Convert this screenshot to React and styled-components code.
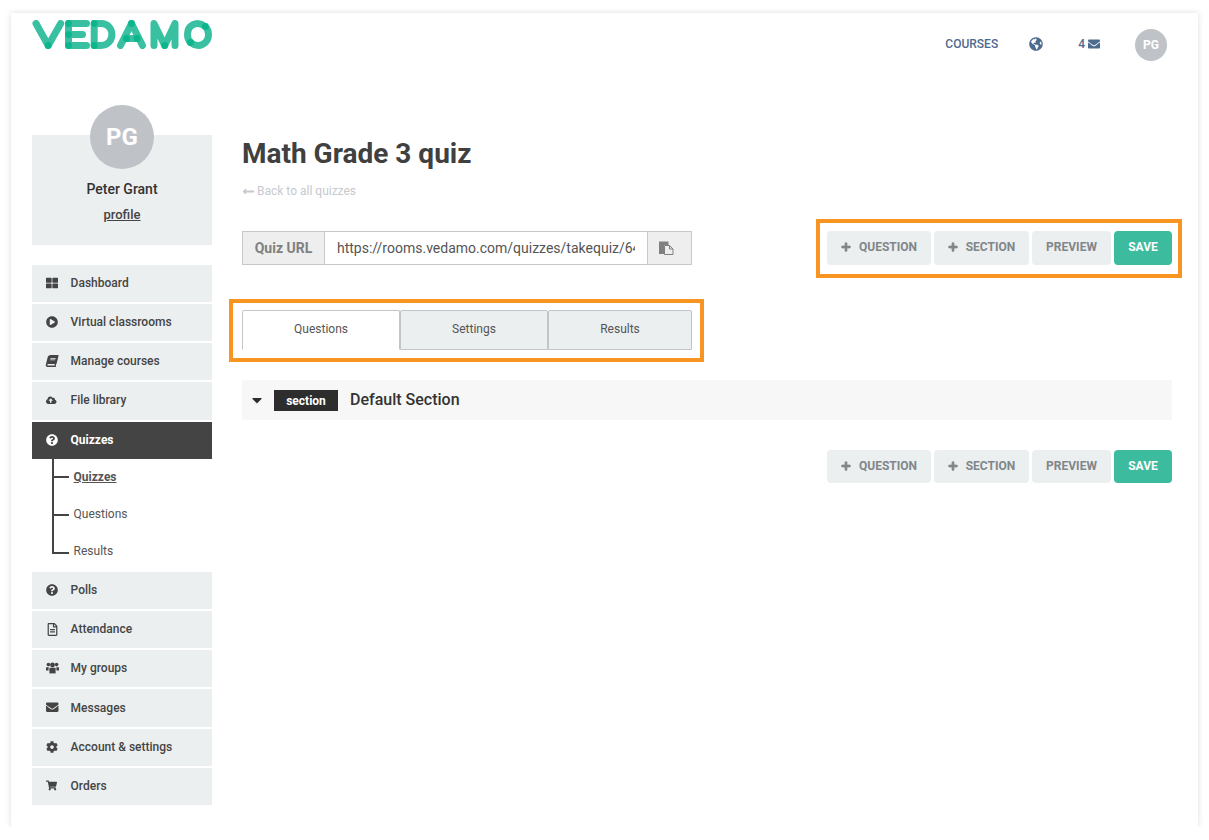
import React from "react";
import styled, { createGlobalStyle } from "styled-components";
import {
  FaThLarge,
  FaPlayCircle,
  FaBook,
  FaCloudUploadAlt,
  FaQuestionCircle,
  FaRegFileAlt,
  FaEnvelope,
  FaCog,
  FaShoppingCart,
  FaGlobeAmericas,
  FaPlus,
  FaCaretDown,
  FaLongArrowAltLeft,
} from "react-icons/fa";

const GlobalStyle = createGlobalStyle`
  html, body { margin: 0; padding: 0; background: #fff; }
  body { font-family: Roboto, "Liberation Sans", sans-serif; color: #404040; }
  * { box-sizing: border-box; }
`;

const Panel = styled.div`
  width: 1187px;
  height: 814px;
  margin: 13px 0 0 11px;
  padding: 7px 26px 0 21px;
  background: #fff;
  box-shadow: 0 0 6px rgba(0, 0, 0, 0.14);
`;

const Header = styled.header`
  display: flex;
  align-items: flex-start;
  justify-content: space-between;
  height: 85px;
`;

const LogoSvg = styled.svg`
  display: block;
  width: 180px;
  height: 29px;
`;

const TopNav = styled.nav`
  display: flex;
  align-items: center;
  height: 32px;
  margin-top: 9px;
  margin-right: 5px;
  color: #4d6a8f;
  font-size: 12px;
  font-weight: 500;
`;

const TopLink = styled.span`
  display: flex;
  align-items: center;
  gap: 3px;
  margin-right: ${(p) => p.$gap}px;
  padding-bottom: 2px;
  svg { font-size: ${(p) => p.$icon || 13}px; }
`;

const Avatar = styled.div`
  display: flex;
  align-items: center;
  justify-content: center;
  flex: none;
  width: ${(p) => p.$size}px;
  height: ${(p) => p.$size}px;
  border-radius: 50%;
  background: #bfc3c8;
  color: #fff;
  font-weight: 700;
  font-size: ${(p) => p.$font}px;
`;

const Content = styled.div`
  display: flex;
  gap: 30px;
`;

const Sidebar = styled.aside`
  width: 180px;
  flex: none;
`;

const Profile = styled.div`
  display: flex;
  flex-direction: column;
  align-items: center;
  height: 110px;
  margin-top: 30px;
  margin-bottom: 19.8px;
  background: #ebeff0;
`;

const ProfileAvatar = styled(Avatar)`
  margin-top: -30px;
`;

const ProfileName = styled.div`
  margin-top: 12px;
  font-size: 14px;
  line-height: 16px;
  font-weight: 500;
  color: #333;
`;

const ProfileLink = styled.a`
  margin-top: 10px;
  font-size: 13px;
  line-height: 16px;
  font-weight: 500;
  color: #444;
  text-decoration: underline;
`;

const NavList = styled.div`
  display: flex;
  flex-direction: column;
  gap: 2px;
`;

const NavItem = styled.a`
  display: flex;
  align-items: center;
  height: 37.2px;
  padding: 0 0 1px 14px;
  background: ${(p) => (p.$active ? "#444444" : "#ebeff0")};
  color: ${(p) => (p.$active ? "#fff" : "#444")};
  font-size: 12px;
  font-weight: ${(p) => (p.$active ? 700 : 500)};
`;

const NavIcon = styled.span`
  display: flex;
  align-items: center;
  width: 24.6px;
  font-size: ${(p) => p.$size || 12}px;
`;

const SkewedBook = styled(FaBook)`
  transform: skewX(-14deg);
`;

const SubList = styled.div`
  position: relative;
  display: flex;
  flex-direction: column;
  height: 111px;
  margin-bottom: 2.2px;
  padding-left: 41.6px;

  &::before {
    content: "";
    position: absolute;
    left: 20px;
    top: 0;
    height: 95px;
    width: 2px;
    background: #444;
  }
`;

const SubItem = styled.a`
  position: relative;
  display: flex;
  align-items: center;
  height: 37px;
  padding-bottom: 1px;
  font-size: 12px;
  color: #555;
  font-weight: ${(p) => (p.$active ? 700 : 400)};
  text-decoration: ${(p) => (p.$active ? "underline" : "none")};

  &::before {
    content: "";
    position: absolute;
    left: -21.6px;
    top: ${(p) => p.$branch}px;
    width: 17px;
    height: 2px;
    background: #444;
  }
`;

const Main = styled.main`
  flex: 1;
  min-width: 0;
`;

const Title = styled.h1`
  margin: 31px 0 0;
  font-size: 28px;
  line-height: 36px;
  font-weight: 700;
  color: #404040;
`;

const BackLink = styled.a`
  display: flex;
  align-items: center;
  gap: 2px;
  margin-top: 11px;
  height: 16px;
  font-size: 12px;
  color: #c6c9ce;
  svg { font-size: 13px; }
`;

const ToolRow = styled.div`
  display: flex;
  justify-content: space-between;
  margin-top: 32px;
`;

const UrlGroup = styled.div`
  display: flex;
  width: 450px;
  height: 34px;
  border: 1px solid #c8c8c8;
`;

const UrlLabel = styled.div`
  display: flex;
  align-items: center;
  justify-content: center;
  width: 82px;
  padding-bottom: 1px;
  background: #eee;
  color: #808080;
  font-size: 14px;
  font-weight: 700;
  border-right: 1px solid #c8c8c8;
`;

const UrlInput = styled.div`
  flex: 1;
  min-width: 0;
  margin: 0 12px;
  font-size: 14px;
  line-height: 32px;
  color: #555;
  white-space: nowrap;
  overflow: hidden;
`;

const UrlCopy = styled.div`
  display: flex;
  align-items: center;
  padding-left: 11px;
  width: 44px;
  background: #eee;
  border-left: 1px solid #c8c8c8;
`;

const Highlight = styled.div`
  position: relative;

  &::after {
    content: "";
    position: absolute;
    top: ${(p) => p.$top}px;
    right: ${(p) => p.$right}px;
    bottom: ${(p) => p.$bottom}px;
    left: ${(p) => p.$left}px;
    border: 4px solid #f89522;
    pointer-events: none;
  }
`;

const Actions = styled.div`
  display: flex;
  gap: 3px;
  justify-content: flex-end;
`;

const ActionButton = styled.button`
  display: flex;
  align-items: center;
  justify-content: center;
  gap: 8px;
  width: ${(p) => p.$w}px;
  height: 34px;
  padding: 0 0 2px;
  border: 0;
  border-radius: 4px;
  background: ${(p) => (p.$primary ? "#3cbb9f" : "#ebeff0")};
  color: ${(p) => (p.$primary ? "#fff" : "#808689")};
  font-family: inherit;
  font-size: 12px;
  font-weight: 700;
  text-transform: uppercase;
  svg {
    font-size: 10px;
    stroke: currentColor;
    stroke-width: 40;
  }
`;

const TabsWrap = styled.div`
  margin-top: 45px;
  width: 450px;
`;

const Tabs = styled.div`
  display: flex;
  height: 40px;
`;

const Tab = styled.div`
  display: flex;
  align-items: center;
  justify-content: center;
  width: ${(p) => p.$w}px;
  padding-bottom: 2px;
  font-size: 12px;
  color: #555;
  border: 1px solid #bfc5c9;
  border-radius: 2px 2px 0 0;
  background: ${(p) => (p.$active ? "#fff" : "#ebeff0")};
  border-bottom-color: ${(p) => (p.$active ? "#fff" : "#bfc5c9")};
`;

const SectionRow = styled.div`
  display: flex;
  align-items: center;
  height: 40px;
  margin-top: 30px;
  padding-left: 7px;
  background: #f7f7f7;
`;

const Caret = styled.span`
  display: flex;
  width: 25px;
  font-size: 16px;
  color: #2d2d2d;
`;

const Badge = styled.span`
  display: flex;
  align-items: center;
  justify-content: center;
  width: 64px;
  height: 21px;
  padding-top: 1px;
  background: #2d2d2d;
  color: #fff;
  font-size: 12px;
  font-weight: 700;
`;

const SectionName = styled.span`
  margin-left: 12px;
  padding-bottom: 1px;
  font-size: 16px;
  font-weight: 500;
  color: #333;
`;

const BottomActions = styled(Actions)`
  margin-top: 30px;

  ${ActionButton} {
    height: 33px;
  }
`;

const GroupIcon = () => (
  <svg width="13" height="12" viewBox="0 0 13 12" fill="currentColor">
    <circle cx="2.4" cy="2.6" r="1.8" />
    <circle cx="10.6" cy="2.6" r="1.8" />
    <circle cx="6.5" cy="3" r="2.4" />
    <path d="M0 5.3H2.6V8.6H0ZM10.4 5.3H13V8.6H10.4Z" />
    <path d="M3.4 5.8H9.6V11.4H3.4Z" />
  </svg>
);

const PasteIcon = () => (
  <svg width="15" height="14" viewBox="0 0 15 14">
    <path d="M0 0.5H9.5V4H5V13H0Z" fill="#808080" />
    <path d="M5.5 4.5H10.5L14 8V13.5H5.5Z" fill="#eee" stroke="#808080" />
    <path d="M10.5 4.5V8H14" fill="none" stroke="#808080" />
  </svg>
);

const menuTop = [
  { icon: <FaThLarge />, label: "Dashboard" },
  { icon: <FaPlayCircle />, label: "Virtual classrooms" },
  { icon: <SkewedBook />, label: "Manage courses" },
  { icon: <FaCloudUploadAlt />, size: 10.5, label: "File library" },
];

const menuBottom = [
  { icon: <FaQuestionCircle />, label: "Polls" },
  { icon: <FaRegFileAlt />, size: 13, label: "Attendance" },
  { icon: <GroupIcon />, label: "My groups" },
  { icon: <FaEnvelope />, size: 12.5, label: "Messages" },
  { icon: <FaCog />, label: "Account & settings" },
  { icon: <FaShoppingCart />, size: 11, label: "Orders" },
];

// light strokes with darker dots where the logo's strokes cross
const logoStrokes = [
  "M36.5 23.5 48.7 45.5 61.2 23.5",
  "M87 23.5H69V45.5H87",
  "M69 34.6H83",
  "M94.7 23.5V45.5H101.5C116 45.5 116 23.5 101.5 23.5H94.7",
  "M121 45.5 132 23.5 143 45.5",
  "M125.5 38.5H138.5",
  "M154.5 45.5V23.5L165.2 45.5 175.5 23.5V45.5",
  "M205.8 26.5C197 20 188 25.5 188 34.5C188 38 189 40.5 191 42.5C199.5 49 209 43.5 209 34.5C209 31 208 28.5 205.8 26.5Z",
];

const logoJoints = [
  [48.7, 45.5], [69, 23.5], [69, 34.6], [69, 45.5], [94.7, 23.5], [94.7, 45.5],
  [132, 23.5], [127, 38.5], [137.5, 38.5], [165.2, 45.5], [205.8, 26.5], [191, 42.5],
];

const Logo = () => (
  <LogoSvg viewBox="32.5 20 180 29" role="img" aria-label="VEDAMO">
    {logoStrokes.map((d) => (
      <path key={d} d={d} fill="none" stroke="#38c0a1" strokeWidth="7" strokeLinecap="round" strokeLinejoin="round" />
    ))}
    {logoJoints.map(([x, y]) => (
      <circle key={x + "-" + y} cx={x} cy={y} r="3.4" fill="#0cb68d" />
    ))}
  </LogoSvg>
);

const QuizActions = ({ as: Wrap = Actions }) => (
  <Wrap>
    <ActionButton $w={104}><FaPlus /> Question</ActionButton>
    <ActionButton $w={95}><FaPlus /> Section</ActionButton>
    <ActionButton $w={79}>Preview</ActionButton>
    <ActionButton $w={58} $primary>Save</ActionButton>
  </Wrap>
);

export default function App() {
  return (
    <>
      <GlobalStyle />
      <Panel>
        <Header>
          <Logo />
          <TopNav>
            <TopLink $gap={31}>COURSES</TopLink>
            <TopLink $gap={35} $icon={14}><FaGlobeAmericas /></TopLink>
            <TopLink $gap={35} $icon={12}>4 <FaEnvelope /></TopLink>
            <Avatar $size={32} $font={12}>PG</Avatar>
          </TopNav>
        </Header>
        <Content>
          <Sidebar>
            <Profile>
              <ProfileAvatar $size={64} $font={24}>PG</ProfileAvatar>
              <ProfileName>Peter Grant</ProfileName>
              <ProfileLink>profile</ProfileLink>
            </Profile>
            <NavList>
              {menuTop.map((m) => (
                <NavItem key={m.label}>
                  <NavIcon $size={m.size}>{m.icon}</NavIcon>
                  {m.label}
                </NavItem>
              ))}
              <NavItem $active>
                <NavIcon><FaQuestionCircle /></NavIcon>
                Quizzes
              </NavItem>
            </NavList>
            <SubList>
              <SubItem $active $branch={17}>Quizzes</SubItem>
              <SubItem $branch={18}>Questions</SubItem>
              <SubItem $branch={19}>Results</SubItem>
            </SubList>
            <NavList>
              {menuBottom.map((m) => (
                <NavItem key={m.label}>
                  <NavIcon $size={m.size}>{m.icon}</NavIcon>
                  {m.label}
                </NavItem>
              ))}
            </NavList>
          </Sidebar>
          <Main>
            <Title>Math Grade 3 quiz</Title>
            <BackLink><FaLongArrowAltLeft /> Back to all quizzes</BackLink>
            <ToolRow>
              <UrlGroup>
                <UrlLabel>Quiz URL</UrlLabel>
                <UrlInput>https://rooms.vedamo.com/quizzes/takequiz/64</UrlInput>
                <UrlCopy><PasteIcon /></UrlCopy>
              </UrlGroup>
              <Highlight $top={-12} $right={-10} $bottom={-13} $left={-11}>
                <QuizActions />
              </Highlight>
            </ToolRow>
            <TabsWrap>
              <Highlight $top={-11} $right={-12} $bottom={-12} $left={-13}>
                <Tabs>
                  <Tab $w={158} $active>Questions</Tab>
                  <Tab $w={148}>Settings</Tab>
                  <Tab $w={144}>Results</Tab>
                </Tabs>
              </Highlight>
            </TabsWrap>
            <SectionRow>
              <Caret><FaCaretDown /></Caret>
              <Badge>section</Badge>
              <SectionName>Default Section</SectionName>
            </SectionRow>
            <QuizActions as={BottomActions} />
          </Main>
        </Content>
      </Panel>
    </>
  );
}
